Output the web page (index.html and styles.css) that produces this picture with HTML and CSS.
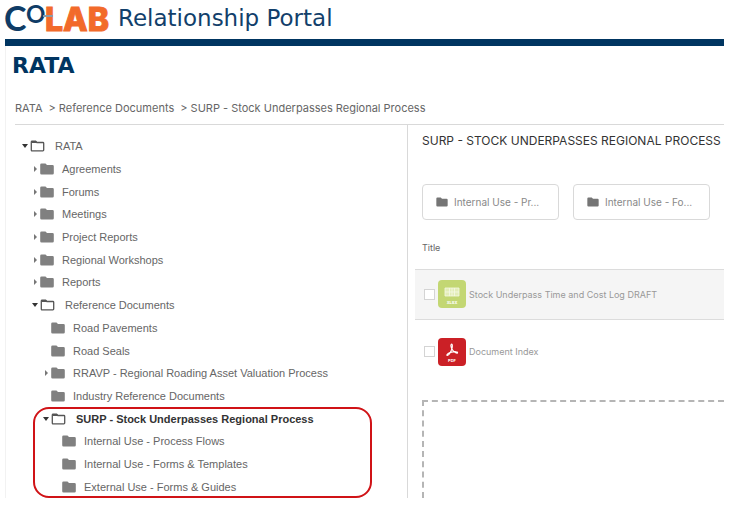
FILE: index.html
```html
<!DOCTYPE html>
<html lang="en">
<head>
    <meta charset="UTF-8">
    <meta name="viewport" content="width=device-width, initial-scale=1.0">
    <title>CoLab Relationship Portal</title>
    <link rel="stylesheet" href="styles.css">
</head>
<body>
    <!-- shared icons -->
    <svg class="sprite" aria-hidden="true">
        <symbol id="folder" viewBox="0 0 14 12">
            <path d="M1.500 0.500h4l1.500 1.500h5.500a1.300 1.300 0 0 1 1.300 1.300v6.900a1.300 1.300 0 0 1-1.300 1.300h-11a1.300 1.300 0 0 1-1.300-1.300v-8.400a1.300 1.300 0 0 1 1.300-1.300z" fill="currentColor"/>
        </symbol>
        <symbol id="folder-open" viewBox="0 0 14 12">
            <path d="M1.600 1.200h3.500l1.300 1.300h6a.8.8 0 0 1 .8.8v6.800a.8.8 0 0 1-.8.8h-10.800a.8.8 0 0 1-.8-.8v-8.100a.8.8 0 0 1 .8-.8z" fill="none" stroke="currentColor" stroke-width="1.300"/>
            <path d="M1 1h4.500l1.500 2h-6z" fill="currentColor"/>
        </symbol>
    </svg>

    <div class="page">
        <header class="header">
            <svg class="logo" viewBox="0 0 104 28" role="img" aria-label="COLAB">
                <text y="27"><tspan class="logo-blue" x="-1" font-size="34">C</tspan><tspan class="logo-blue" x="21" y="19" font-size="24">O</tspan><tspan class="logo-orange" x="40" y="27" font-size="32">LAB</tspan></text>
                <path d="M38 12h10" stroke="#8d9aa6" stroke-width="2"/>
            </svg>
            <span class="portal-name">Relationship Portal</span>
        </header>

        <div class="body">
            <h1>RATA</h1>
            <nav class="breadcrumb" aria-label="Breadcrumb">
                <a href="#">RATA</a>
                <a href="#">&gt; Reference Documents</a>
                <a href="#">&gt; SURP - Stock Underpasses Regional Process</a>
            </nav>

            <div class="columns">
                <ul class="tree">
                    <li class="node level-0 open"><svg><use href="#folder-open"/></svg><a href="#">RATA</a></li>
                    <li class="node level-1 closed"><svg><use href="#folder"/></svg><a href="#">Agreements</a></li>
                    <li class="node level-1 closed"><svg><use href="#folder"/></svg><a href="#">Forums</a></li>
                    <li class="node level-1 closed"><svg><use href="#folder"/></svg><a href="#">Meetings</a></li>
                    <li class="node level-1 closed"><svg><use href="#folder"/></svg><a href="#">Project Reports</a></li>
                    <li class="node level-1 closed"><svg><use href="#folder"/></svg><a href="#">Regional Workshops</a></li>
                    <li class="node level-1 closed"><svg><use href="#folder"/></svg><a href="#">Reports</a></li>
                    <li class="node level-1 open"><svg><use href="#folder-open"/></svg><a href="#">Reference Documents</a></li>
                    <li class="node level-2"><svg><use href="#folder"/></svg><a href="#">Road Pavements</a></li>
                    <li class="node level-2"><svg><use href="#folder"/></svg><a href="#">Road Seals</a></li>
                    <li class="node level-2 closed"><svg><use href="#folder"/></svg><a href="#">RRAVP - Regional Roading Asset Valuation Process</a></li>
                    <li class="node level-2"><svg><use href="#folder"/></svg><a href="#">Industry Reference Documents</a></li>
                    <li class="highlight">
                        <ul>
                            <li class="node level-2 open current"><svg><use href="#folder-open"/></svg><a href="#">SURP - Stock Underpasses Regional Process</a></li>
                            <li class="node level-3"><svg><use href="#folder"/></svg><a href="#">Internal Use - Process Flows</a></li>
                            <li class="node level-3"><svg><use href="#folder"/></svg><a href="#">Internal Use - Forms &amp; Templates</a></li>
                            <li class="node level-3"><svg><use href="#folder"/></svg><a href="#">External Use - Forms &amp; Guides</a></li>
                        </ul>
                    </li>
                </ul>

                <main class="content">
                    <h2>SURP - STOCK UNDERPASSES REGIONAL PROCESS</h2>
                    <div class="tiles">
                        <a class="tile" href="#"><svg><use href="#folder"/></svg>Internal Use - Pr...</a>
                        <a class="tile" href="#"><svg><use href="#folder"/></svg>Internal Use - Fo...</a>
                        <span class="tile"></span>
                    </div>
                    <table class="files">
                        <thead>
                            <tr><th>Title</th></tr>
                        </thead>
                        <tbody>
                            <tr class="selected">
                                <td>
                                    <div class="file">
                                        <input type="checkbox" id="file1">
                                        <svg class="file-icon" viewBox="0 0 28 28" aria-hidden="true">
                                            <rect width="28" height="28" rx="4" fill="#c3d773"/>
                                            <path d="M7 8h14v8h-14zM7 12h14M11.500 8v8M14 8v8M16.500 8v8" fill="#e3edb8" stroke="#f5f9e4" stroke-width=".8"/>
                                            <text x="14" y="24" class="file-type">XLSX</text>
                                        </svg>
                                        <label for="file1">Stock Underpass Time and Cost Log DRAFT</label>
                                    </div>
                                </td>
                            </tr>
                            <tr>
                                <td>
                                    <div class="file">
                                        <input type="checkbox" id="file2">
                                        <svg class="file-icon" viewBox="0 0 28 28" aria-hidden="true">
                                            <rect width="28" height="28" rx="4" fill="#cb2026"/>
                                            <path d="M13.300 6.200c1.500-.6 1.200 3.200.2 5.700-1 2.400-2.800 5.600-4.100 5.600-1.600-.3.900-2.700 4.100-3.400 3.400-.7 6.300-.5 6 .6-.4 1.200-3-.2-4.500-2-1.700-2-2.800-6-1.700-6.500z" fill="none" stroke="#fff" stroke-width="1.200"/>
                                            <text x="14" y="24" class="file-type">PDF</text>
                                        </svg>
                                        <label for="file2">Document Index</label>
                                    </div>
                                </td>
                            </tr>
                        </tbody>
                    </table>
                    <div class="dropzone"></div>
                </main>
            </div>
        </div>
    </div>
</body>
</html>
```
FILE: styles.css
```css
* {
    box-sizing: border-box;
}
body {
    margin: 0;
    background: white;
    color: #666;
    font-family: Inter, "Liberation Sans", sans-serif;
    font-size: 12px;
}
a {
    color: inherit;
    text-decoration: none;
}
.sprite {
    position: absolute;
    width: 0;
    height: 0;
}
.page {
    display: flex;
    flex-direction: column;
    min-height: 100vh;
    padding: 4px 12px 11px 5px;
}
.header {
    display: flex;
    align-items: center;
    gap: 9px;
    height: 42px;
    padding-bottom: 7px;
    border-bottom: 7px solid #003561;
}
.logo {
    width: 104px;
    height: 28px;
    overflow: visible;
}
.logo-blue {
    font-family: Lato, sans-serif;
    font-weight: bold;
    fill: #0f3c66;
}
.logo-orange {
    font-family: Inter, sans-serif;
    font-weight: 800;
    fill: #f26a2a;
    stroke: #f26a2a;
}
.portal-name {
    color: #123f6b;
    font-family: "DejaVu Sans", sans-serif;
    font-size: 23px;
    line-height: 28px;
    white-space: nowrap;
}
.body {
    display: flex;
    flex-direction: column;
    flex: 1;
    padding-left: 9px;
    border-left: 1px solid #f2f2f2;
}
h1 {
    margin: 8px 0 0 -3px;
    color: #003561;
    font-family: "DejaVu Sans", sans-serif;
    font-size: 22px;
    line-height: 24px;
}
.breadcrumb {
    display: flex;
    gap: 6px;
    margin-top: 21px;
    padding-bottom: 7px;
    border-bottom: 1px solid #d9d9d9;
    font-size: 11px;
    line-height: 18px;
}
.columns {
    display: grid;
    grid-template-columns: minmax(300px, 393fr) minmax(0, 316fr);
    flex: 1;
}

/* folder tree */
.tree {
    display: grid;
    grid-template-rows: repeat(16, 1fr);
    margin: 0;
    padding: 10px 0 0;
    border-right: 1px solid #d9d9d9;
    list-style: none;
    font-family: "Liberation Sans", Arial, sans-serif;
    font-size: 11px;
}
.node {
    display: flex;
    align-items: center;
    line-height: 16px;
}
.node::before {
    content: "";
    width: 10px;
}
.node.closed::before {
    width: 0;
    margin: 0 3px 0 4px;
    border: solid transparent;
    border-width: 3px 0 3px 3px;
    border-left-color: #777;
}
.node.open::before {
    width: 0;
    margin: 0 2px;
    border: solid transparent;
    border-width: 4px 3px 0;
    border-top-color: #333;
}
.node svg {
    width: 14px;
    height: 12px;
    margin-right: 8px;
    color: #808080;
}
.node.open svg {
    width: 15px;
    margin-right: 10px;
    color: #555;
}
.level-0 {
    padding-left: 5px;
}
.level-1 {
    padding-left: 15px;
}
.level-2 {
    padding-left: 26px;
}
.level-3 {
    padding-left: 37px;
}
.current {
    color: #333;
    font-weight: bold;
}
.highlight {
    position: relative;
    grid-row: span 4;
}
.highlight ul {
    display: grid;
    grid-template-rows: repeat(4, 1fr);
    height: 100%;
    margin: 0;
    padding: 0;
    list-style: none;
}
/* red outline drawn over the branch */
.highlight::after {
    content: "";
    position: absolute;
    inset: 0 35px 0 18px;
    border: 2px solid #d01317;
    border-radius: 16px;
    pointer-events: none;
}

/* right hand side */
.content {
    display: flex;
    flex-direction: column;
    padding-left: 7px;
    overflow: hidden;
}
h2 {
    margin: 7px 0 0 7px;
    color: #333;
    font-size: 12px;
    font-weight: normal;
    line-height: 18px;
    white-space: nowrap;
}
.tiles {
    display: flex;
    gap: 14px;
    margin: 34px 0 0 7px;
}
.tile {
    display: flex;
    flex: none;
    align-items: center;
    gap: 6px;
    width: 137px;
    height: 36px;
    padding-left: 13px;
    border: 1px solid #d9d9d9;
    border-radius: 4px;
    color: #888;
    font-size: 10px;
}
.tile svg {
    width: 12px;
    height: 10px;
    color: #757575;
}
.files {
    width: 100%;
    margin-top: 20px;
    border-collapse: collapse;
}
.files th {
    height: 29px;
    padding: 0 7px 12px;
    color: #666;
    font-size: 9px;
    font-weight: normal;
    line-height: 16px;
    text-align: left;
}
.files td {
    height: 65px;
    padding: 0 9px;
}
.files .selected td {
    height: 50px;
    background: #f5f5f5;
    border: solid #dcdcdc;
    border-width: 1px 0;
}
.file {
    display: flex;
    align-items: center;
    gap: 3px;
    color: #999;
    font-size: 9px;
}
.file input {
    width: 11px;
    height: 11px;
    margin: 0;
    border: 1px solid #d4d4d4;
    background: white;
    appearance: none;
}
.file-icon {
    width: 28px;
    height: 28px;
}
.file-type {
    fill: white;
    font-size: 4px;
    font-weight: bold;
    text-anchor: middle;
}
.dropzone {
    flex: 1;
    margin: 16px 0 0 7px;
    border: dashed #b5b5b5;
    border-width: 2px 0 0 2px;
}
```
